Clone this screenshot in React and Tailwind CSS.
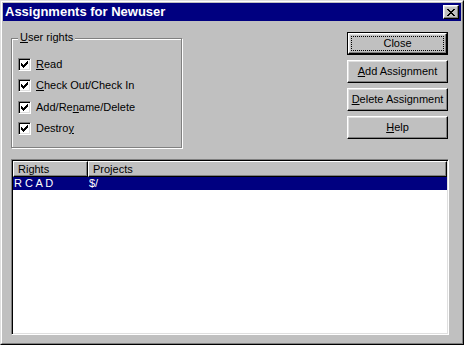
const CHECK = "M6 0h1v1h-1zM5 1h2v1h-2zM0 2h1v1h-1zM4 2h3v1h-3zM0 3h2v1h-2zM3 3h3v1h-3zM0 4h5v1h-5zM1 5h3v1h-3zM2 6h1v1h-1z";
const CROSS = "M0 0h2v1h-2zM6 0h2v1h-2zM1 1h2v1h-2zM5 1h2v1h-2zM2 2h4v1h-4zM3 3h2v1h-2zM2 4h4v1h-4zM1 5h2v1h-2zM5 5h2v1h-2zM0 6h2v1h-2zM6 6h2v1h-2z";

const Check = () => (
  <div className="w-[13px] h-[13px] bg-white border border-t-[#808080] border-l-[#808080] border-r-white border-b-white shadow-[inset_1px_1px_0_#000,inset_-1px_-1px_0_#dfdfdf] flex items-center justify-center shrink-0">
    <svg width="7" height="7" viewBox="0 0 7 7" shapeRendering="crispEdges">
      <path d={CHECK} fill="#000" />
    </svg>
  </div>
);

const Option = ({ children }) => (
  <div className="h-[21.33px] flex items-center pl-[6px]">
    <Check />
    <span className="ml-[5px] leading-[13px]">{children}</span>
  </div>
);

const Button = ({ children, focused }) =>
  focused ? (
    <div className="w-[101px] h-[23px] border border-black">
      <div className="w-full h-full border border-t-white border-l-white border-r-black border-b-black shadow-[inset_-1px_-1px_0_#808080,inset_1px_1px_0_#dfdfdf] p-[2px]">
        <div className="w-full h-full border border-dotted border-black flex items-center justify-center leading-[13px]">
          {children}
        </div>
      </div>
    </div>
  ) : (
    <div className="w-[101px] h-[23px] border border-t-white border-l-white border-r-black border-b-black shadow-[inset_-1px_-1px_0_#808080,inset_1px_1px_0_#dfdfdf] flex items-center justify-center leading-[13px]">
      {children}
    </div>
  );

const U = ({ children }) => <span className="underline underline-offset-[1px]">{children}</span>;

export default function App() {
  return (
    <div className="w-[464px] h-[345px] bg-[#c0c0c0] border border-t-[#dfdfdf] border-l-[#dfdfdf] border-r-black border-b-black font-['Liberation_Sans',Arial,sans-serif] text-[11px] text-black">
      <div className="h-full border border-t-white border-l-white border-r-[#808080] border-b-[#808080] p-px flex flex-col">
        {/* Title bar */}
        <div className="h-[18px] bg-[#000080] flex items-center justify-between pl-[2px] pr-[2px] shrink-0">
          <span className="text-white font-bold text-[13px] leading-[14px]">Assignments for Newuser</span>
          <div className="w-[16px] h-[14px] bg-[#c0c0c0] border border-t-white border-l-white border-r-black border-b-black shadow-[inset_-1px_-1px_0_#808080,inset_1px_1px_0_#dfdfdf] flex items-center justify-center">
            <svg width="8" height="7" viewBox="0 0 8 7" shapeRendering="crispEdges">
              <path d={CROSS} fill="#000" />
            </svg>
          </div>
        </div>

        {/* Body */}
        <div className="flex-1 flex flex-col pl-[8px] pr-[12px] pt-[11px] pb-[7px]">
          <div className="flex justify-between items-start shrink-0">
            <div className="relative mt-[6px] w-[171px] h-[110px] border border-[#808080] shadow-[inset_1px_1px_0_#fff,1px_1px_0_#fff]">
              <span className="absolute -top-[8px] left-[6px] bg-[#c0c0c0] px-[2px] leading-[13px]">
                <U>U</U>ser rights
              </span>
              <div className="flex flex-col pt-[15px]">
                <Option><U>R</U>ead</Option>
                <Option><U>C</U>heck Out/Check In</Option>
                <Option>Add/Re<U>n</U>ame/Delete</Option>
                <Option>Destro<U>y</U></Option>
              </div>
            </div>

            <div className="flex flex-col gap-[5px] mr-[1px]">
              <Button focused>Close</Button>
              <Button><U>A</U>dd Assignment</Button>
              <Button><U>D</U>elete Assignment</Button>
              <Button><U>H</U>elp</Button>
            </div>
          </div>

          {/* List view */}
          <div className="mt-[11px] flex-1 bg-white border border-t-[#808080] border-l-[#808080] border-r-white border-b-white shadow-[inset_1px_1px_0_#000,inset_-1px_-1px_0_#dfdfdf] p-[1px] flex flex-col">
            <div className="h-[16px] flex shrink-0">
              <div className="w-[75px] bg-[#c0c0c0] border border-t-white border-l-white border-r-black border-b-black shadow-[inset_-1px_-1px_0_#808080] pl-[4px] leading-[14px]">
                Rights
              </div>
              <div className="flex-1 bg-[#c0c0c0] border border-t-white border-l-white border-r-black border-b-black shadow-[inset_-1px_-1px_0_#808080] pl-[4px] leading-[14px]">
                Projects
              </div>
            </div>
            <div className="h-[13px] bg-[#000080] text-white flex leading-[13px]">
              <div className="w-[75px] pl-[1px]">R C A D</div>
              <div className="pl-[1px]">$/</div>
            </div>
          </div>
        </div>
      </div>
    </div>
  );
}
